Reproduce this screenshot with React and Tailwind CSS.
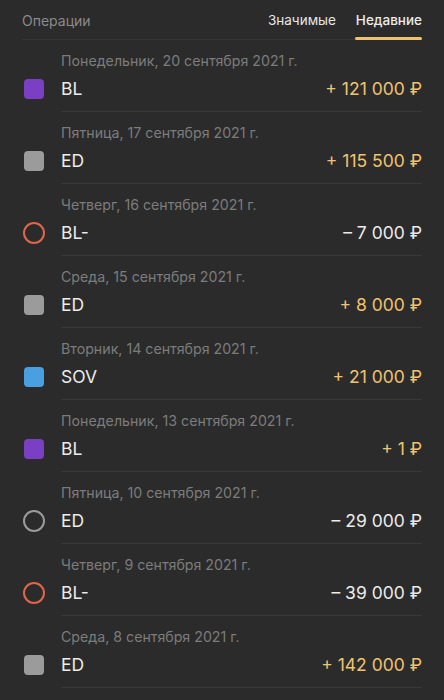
import React from "react";

const ops = [
  { date: "Понедельник, 20 сентября 2021 г.", name: "BL", icon: "square", color: "bg-[#7a3fc2]", amount: "+ 121 000 ₽", plus: true },
  { date: "Пятница, 17 сентября 2021 г.", name: "ED", icon: "square", color: "bg-[#9b9b9b]", amount: "+ 115 500 ₽", plus: true },
  { date: "Четверг, 16 сентября 2021 г.", name: "BL-", icon: "circle", color: "border-[#e0654a]", amount: "– 7 000 ₽", plus: false },
  { date: "Среда, 15 сентября 2021 г.", name: "ED", icon: "square", color: "bg-[#9b9b9b]", amount: "+ 8 000 ₽", plus: true },
  { date: "Вторник, 14 сентября 2021 г.", name: "SOV", icon: "square", color: "bg-[#4a9fe0]", amount: "+ 21 000 ₽", plus: true },
  { date: "Понедельник, 13 сентября 2021 г.", name: "BL", icon: "square", color: "bg-[#7a3fc2]", amount: "+ 1 ₽", plus: true },
  { date: "Пятница, 10 сентября 2021 г.", name: "ED", icon: "circle", color: "border-[#9b9b9b]", amount: "– 29 000 ₽", plus: false },
  { date: "Четверг, 9 сентября 2021 г.", name: "BL-", icon: "circle", color: "border-[#e0654a]", amount: "– 39 000 ₽", plus: false },
  { date: "Среда, 8 сентября 2021 г.", name: "ED", icon: "square", color: "bg-[#9b9b9b]", amount: "+ 142 000 ₽", plus: true },
];

// строка операции
const OpRow = ({ op }) => (
  <div className="flex">
    <div className="w-[61px] shrink-0 flex flex-col">
      <div className="h-[37px]" />
      <div className="h-6 flex items-center pl-[23px]">
        {op.icon === "square" ? (
          <div className={`w-5 h-5 ml-[1px] rounded-[4px] ${op.color}`} />
        ) : (
          <div className={`w-[22px] h-[22px] rounded-full border-2 ${op.color}`} />
        )}
      </div>
    </div>
    <div className="flex-1 mr-[22px] pt-[10px] pb-[10px] border-b border-[#393939]">
      <div className="h-5 leading-5 pt-[1px] text-[14.2px] text-[#7c7c7c]">{op.date}</div>
      <div className="mt-[7px] h-6 flex items-center justify-between text-[17.5px]">
        <span className="text-[#ececec]">{op.name}</span>
        <span className={op.plus ? "text-[#f0c36e]" : "text-[#ececec]"}>{op.amount}</span>
      </div>
    </div>
  </div>
);

export default function App() {
  return (
    <div
      className="w-[444px] min-h-[700px] bg-[#2b2b2b] overflow-hidden"
      style={{ fontFamily: "Inter, 'Noto Sans', 'DejaVu Sans', sans-serif" }}
    >
      {/* шапка с вкладками */}
      <div className="mx-[22px] h-10 flex items-stretch justify-between border-b border-[#353535]">
        <div className="flex items-center pt-[2px] text-[14px] text-[#8a8a8a]">Операции</div>
        <div className="flex items-stretch gap-[20px] text-[13.5px]">
          <div className="flex items-center pt-[2px] text-[#e6e6e6]">Значимые</div>
          <div className="relative flex items-center pt-[2px] font-medium text-[#ececec]">
            Недавние
            <div className="absolute left-[-1px] right-0 bottom-[-1px] h-[3px] rounded-full bg-[#eec073]" />
          </div>
        </div>
      </div>
      {ops.map((op, i) => (
        <OpRow key={i} op={op} />
      ))}
    </div>
  );
}
